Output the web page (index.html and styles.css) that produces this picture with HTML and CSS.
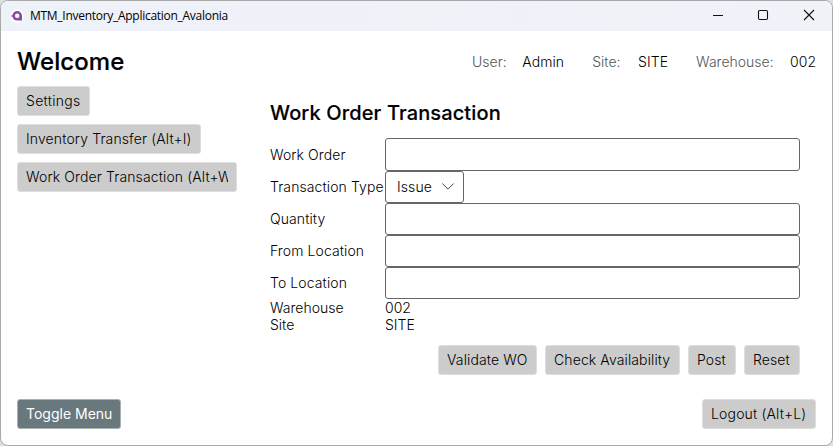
FILE: index.html
```
<!DOCTYPE html>
<html lang="en">
<head>
<meta charset="utf-8">
<title>MTM_Inventory_Application_Avalonia</title>
<link rel="stylesheet" href="styles.css">
</head>
<body>
<div class="window">
  <header class="titlebar">
    <svg class="logo" width="14" height="14" viewBox="0 0 14 14"><circle cx="7" cy="7" r="7" fill="#fff"/><path d="M12 11.6V6.8A4.8 4.8 0 1 0 7.2 11.6Z" fill="#8a4bab"/><path d="M1.4 7H4" stroke="#8a4bab" stroke-width="1.6"/><circle cx="7.2" cy="6.8" r="2.2" fill="#fff"/></svg>
    <span class="caption">MTM_Inventory_Application_Avalonia</span>
    <svg class="controls" width="104" height="12" viewBox="0 0 104 12" fill="none" stroke="#111" stroke-width="1.1"><path d="M0 6.5H10"/><rect x="45.5" y="1.5" width="9" height="9" rx="1.2"/><path d="M91 1L101 11M101 1L91 11"/></svg>
  </header>
  <div class="top">
    <h1>Welcome</h1>
    <div class="info">
      <span class="key user">User:</span><span class="val admin">Admin</span>
      <span class="key site">Site:</span><span class="val sitev">SITE</span>
      <span class="key wh">Warehouse:</span><span class="val">002</span>
    </div>
  </div>
  <div class="main">
    <nav class="menu">
      <button class="btn w-settings"><span>Settings</span></button>
      <button class="btn w-transfer"><span>Inventory Transfer (Alt+I)</span></button>
      <button class="btn w-order"><span>Work Order Transaction (Alt+W)</span></button>
    </nav>
    <section class="content">
      <h2>Work Order Transaction</h2>
      <div class="form">
        <label>Work Order</label><div class="field"></div>
        <label>Transaction Type</label>
        <div class="select"><span>Issue</span><svg width="12" height="7" viewBox="0 0 12 7" fill="none" stroke="#444" stroke-width="1"><path d="M.4 .5L6 6.1L11.6 .5"/></svg></div>
        <label>Quantity</label><div class="field"></div>
        <label>From Location</label><div class="field"></div>
        <label>To Location</label><div class="field"></div>
        <span>Warehouse</span><span>002</span>
        <span>Site</span><span>SITE</span>
      </div>
      <div class="actions">
        <button class="btn w-validate"><span>Validate WO</span></button>
        <button class="btn w-check"><span>Check Availability</span></button>
        <button class="btn w-post"><span>Post</span></button>
        <button class="btn w-reset"><span>Reset</span></button>
      </div>
    </section>
  </div>
  <footer class="bottom">
    <button class="btn dark w-toggle"><span>Toggle Menu</span></button>
    <button class="btn w-logout"><span>Logout (Alt+L)</span></button>
  </footer>
</div>
</body>
</html>
```
FILE: styles.css
```
* { box-sizing: border-box; }
body { margin: 0; background: #dedede; font: 300 14px/17px Inter, sans-serif; color: #000; }
.window { width: 833px; height: 446px; border: 1px solid #a9a9a9; border-radius: 8px; background: #fff; overflow: hidden; display: flex; flex-direction: column; }
.titlebar { height: 30px; flex: none; background: linear-gradient(90deg, #edf2f9, #f1f1f8 50%, #eff3f8); display: flex; align-items: center; padding: 0 15px 2px 9px; }
.logo { margin: 2px 6px 0 0; }
.caption { font: 12px/16px "Open Sans", sans-serif; letter-spacing: -0.28px; flex: 1; padding-top: 1px; }
.top { height: 55px; flex: none; display: flex; justify-content: space-between; padding: 16px 16px 0; }
h1 { margin: 0; font-size: 24px; line-height: 29px; font-weight: 500; letter-spacing: 0.1px; -webkit-text-stroke: 0.2px #000; }
.info { display: flex; padding-top: 6px; }
.key { color: #555; margin-right: 16px; }
.val { font-weight: 350; }
.user { margin-right: 15.5px; }
.admin { margin-right: 28px; letter-spacing: 0.1px; }
.site { margin-right: 17.5px; }
.sitev { margin-right: 28px; letter-spacing: 0.1px; }
.wh { margin-right: 16.5px; }
.main { flex: 1; display: flex; padding: 0 16px; }
.menu { width: 219px; margin-right: 34px; display: flex; flex-direction: column; align-items: flex-start; gap: 8px; letter-spacing: 0.13px; }
.btn { height: 30px; border: 1px solid #dedede; border-radius: 3px; background: #ccc; color: #000; padding: 0 8px 1px; font: inherit; letter-spacing: inherit; display: flex; align-items: center; }
.btn span { flex: 1; overflow: hidden; white-space: nowrap; text-align: left; }
.w-settings { width: 73px; letter-spacing: 0.3px; }
.w-transfer { width: 184px; }
.w-order { width: 220px; }
.content { width: 530px; padding-top: 15px; }
h2 { margin: 0 0 12px; font-size: 20px; line-height: 25px; font-weight: 500; letter-spacing: 0.12px; -webkit-text-stroke: 0.15px #000; }
.form { display: grid; grid-template-columns: 115px 415px; grid-template-rows: 33px repeat(4, 32px) 17px 17px; align-items: center; white-space: nowrap; }
.form label { padding-bottom: 1px; letter-spacing: 0.1px; }
.field, .select { border: 1px solid #666; border-radius: 3px; align-self: stretch; }
.select { width: 79px; display: flex; align-items: center; padding: 0 9px 1px 11px; justify-content: space-between; letter-spacing: 0.1px; }
.actions { display: flex; justify-content: flex-end; gap: 8px; margin-top: 12px; letter-spacing: 0.11px; }
.w-validate { width: 99px; }
.w-check { width: 135px; }
.w-post { width: 48px; }
.w-reset { width: 56px; }
.bottom { flex: none; display: flex; justify-content: space-between; padding: 0 16px 16px; letter-spacing: 0.17px; }
.dark { background: #68787d; color: #fff; border-color: #a8b2b5; letter-spacing: 0; font-weight: 400; }
.w-toggle { width: 104px; }
.w-logout { width: 114px; }
```
